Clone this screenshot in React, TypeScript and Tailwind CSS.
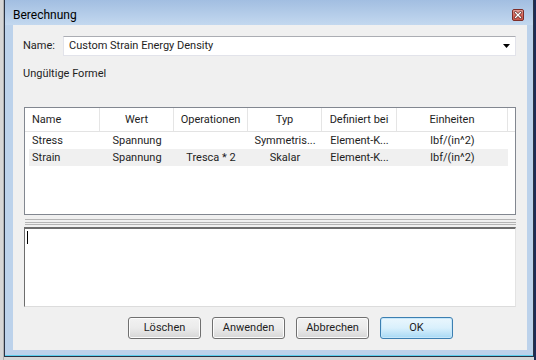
import React from "react";

const cols = [
  { label: "Name", hw: "w-[75px]", rw: "w-[71px]", left: true },
  { label: "Wert", hw: "w-[74px]", rw: "w-[74px]" },
  { label: "Operationen", hw: "w-[74px]", rw: "w-[74px]" },
  { label: "Typ", hw: "w-[74px]", rw: "w-[74px]" },
  { label: "Definiert bei", hw: "w-[75px]", rw: "w-[75px]" },
  { label: "Einheiten", hw: "w-[111px]", rw: "w-[111px]" },
];

const rows = [
  ["Stress", "Spannung", "", "Symmetris...", "Element-K...", "lbf/(in^2)"],
  ["Strain", "Spannung", "Tresca * 2", "Skalar", "Element-K...", "lbf/(in^2)"],
];

function Btn({ label, primary }: { label: string; primary?: boolean }) {
  return (
    <div
      className={
        primary
          ? "w-[73px] h-[22px] rounded-[3px] border border-[#3c7fb1] bg-gradient-to-b from-[#eaf6fd] via-[#d9f0fc] to-[#a7d9f5] shadow-[inset_0_0_0_1px_#c6e7fa] flex items-center justify-center"
          : "w-[73px] h-[22px] rounded-[3px] border border-[#707070] bg-gradient-to-b from-[#f2f2f2] via-[#ebebeb] to-[#d6d6d6] shadow-[inset_0_0_0_1px_#fcfcfc] flex items-center justify-center"
      }
    >
      <span className="leading-[14px]">{label}</span>
    </div>
  );
}

export default function App() {
  return (
    <div className="w-[536px] h-[360px] flex bg-[#d6d6d6] overflow-hidden font-[Roboto,sans-serif] text-[11px] text-[#1e1e1e]">
      <div className="w-[4px] h-full border-r border-[#b0b0b0]" />
      <div className="w-[530px] h-[357px] flex flex-col border-l border-r border-b border-[#2a3445] bg-[#bcd2eb]">
        {/* Title bar */}
        <div className="h-[25px] flex items-start justify-between pl-[8px] pr-[9px] bg-gradient-to-b from-[#a2bee1] to-[#c3d8ef]">
          <span className="pt-[8px] leading-[14px] text-[12px] text-black">Berechnung</span>
          <svg width="12" height="12" viewBox="0 0 12 12" className="mt-[9px]">
            <defs>
              <linearGradient id="cg" x1="0" y1="0" x2="0" y2="1">
                <stop offset="0" stopColor="#e9a9a2" />
                <stop offset="0.5" stopColor="#d4675c" />
                <stop offset="1" stopColor="#c9574c" />
              </linearGradient>
            </defs>
            <rect x="0.5" y="0.5" width="11" height="11" rx="1.5" fill="url(#cg)" stroke="#7e2d28" />
            <path d="M3.5 3.5 L8.5 8.5 M8.5 3.5 L3.5 8.5" stroke="#5a1f1b" strokeWidth="2.6" strokeLinecap="square" />
            <path d="M3.5 3.5 L8.5 8.5 M8.5 3.5 L3.5 8.5" stroke="#ffffff" strokeWidth="1.4" strokeLinecap="square" />
          </svg>
        </div>
        {/* Body with frame */}
        <div className="flex-1 flex flex-col pl-[8px] pr-[6px] border-b border-[#5ccfee]">
          <div className="w-[514px] h-[325px] bg-[#f0f0f0] flex flex-col">
            {/* Name row */}
            <div className="mt-[11px] h-[20px] flex items-center pl-[10px]">
              <span className="w-[40px] leading-[14px]">Name:</span>
              <div className="w-[453px] h-[20px] bg-white border border-[#e2e3ea] border-t-[#abadb3] flex items-center justify-between pl-[5px] pr-[5px]">
                <span className="leading-[14px]">Custom Strain Energy Density</span>
                <svg width="7" height="4" viewBox="0 0 7 4">
                  <path d="M0 0 H7 L3.5 4 Z" fill="#000" />
                </svg>
              </div>
            </div>
            <div className="mt-[11px] h-[14px] leading-[14px] pl-[10px]">Ungültige Formel</div>
            {/* Table */}
            <div className="mt-[26px] mx-[11px] h-[108px] border border-[#828790] bg-white flex flex-col">
              <div className="h-[24px] flex border-b border-[#e3e3e3]">
                {cols.map((c) => (
                  <div
                    key={c.label}
                    className={
                      c.hw +
                      " h-full border-r border-[#e5e5e5] flex items-center " +
                      (c.left ? "pl-[7px]" : "justify-center")
                    }
                  >
                    <span className="leading-[14px]">{c.label}</span>
                  </div>
                ))}
              </div>
              {rows.map((r, i) => (
                <div
                  key={i}
                  className={
                    "ml-[4px] w-[479px] h-[17px] flex " + (i === 1 ? "bg-[#f0f0f0]" : "")
                  }
                >
                  {r.map((v, j) => (
                    <div
                      key={j}
                      className={
                        cols[j].rw +
                        " h-full flex items-center whitespace-nowrap " +
                        (cols[j].left ? "pl-[3px]" : "justify-center")
                      }
                    >
                      <span className="leading-[14px]">{v}</span>
                    </div>
                  ))}
                </div>
              ))}
            </div>
            {/* Splitter */}
            <div className="ml-[12px] mr-[11px] flex flex-col">
              <div className="h-[4px]" />
              <div className="h-[1px] bg-[#b4b4b4]" />
              <div className="h-[2px]" />
              <div className="h-[1px] bg-[#b4b4b4]" />
              <div className="h-[1px]" />
              <div className="h-[1px] bg-[#b4b4b4]" />
              <div className="h-[2px]" />
            </div>
            {/* Text area */}
            <div className="mx-[11px] h-[80px] bg-white border-t-2 border-l border-[#6d6d6d] border-r border-b border-r-[#e3e3e3] border-b-[#dcdcdc] pl-[2px] pt-[2px]">
              <div className="w-[1px] h-[13px] bg-black" />
            </div>
            {/* Buttons */}
            <div className="mt-[10px] pl-[115px] flex gap-[11px]">
              <Btn label="Löschen" />
              <Btn label="Anwenden" />
              <Btn label="Abbrechen" />
              <Btn label="OK" primary />
            </div>
          </div>
          <div className="h-[5px]" />
        </div>
      </div>
      <div className="w-[2px] h-full bg-[#1d2b55]" />
    </div>
  );
}
